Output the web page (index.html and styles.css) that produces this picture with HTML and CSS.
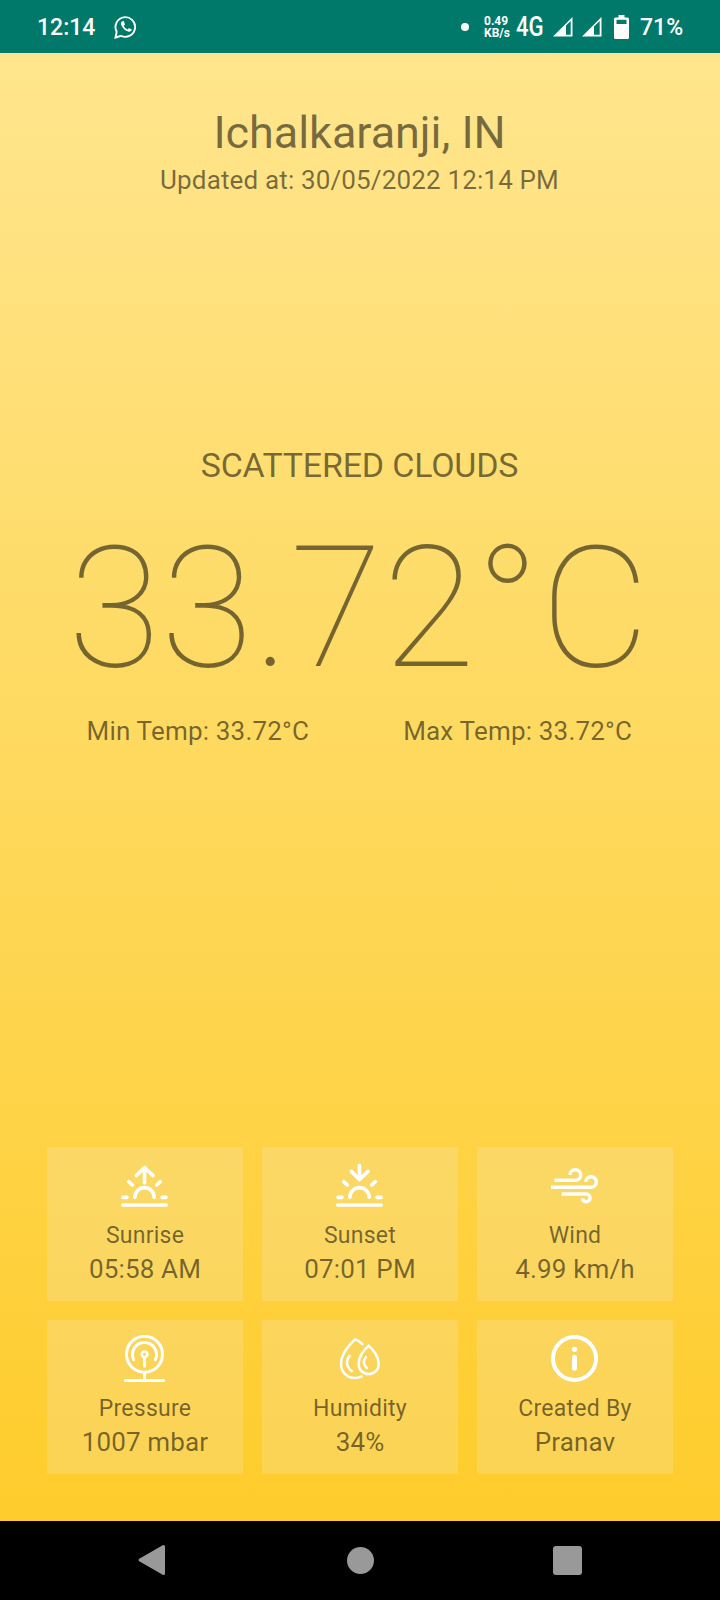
FILE: index.html
```html
<!DOCTYPE html>
<html lang="en">
<head>
<meta charset="utf-8">
<title>Weather</title>
<link rel="stylesheet" href="styles.css">
</head>
<body>
<div class="status-bar">
  <span class="clock">12:14</span>
  <svg class="whatsapp" viewBox="0 0 24 24"><path d="M1.500 22.500l1.200-5.800A9.800 9.800 0 1 1 7 20.800z" fill="none" stroke="#fff" stroke-width="1.900"/><path d="M8.300 6.200c-1 .5-1.600 1.500-1.300 2.900.8 3.600 4.200 7 7.900 7.700 1.400.3 2.700-.8 2.900-2.200l-2.800-1.500-1.400 1.500c-1.800-.8-3.100-2.100-3.900-3.800l1.300-1.400L9.700 6.100z" fill="#fff"/></svg>
  <span class="dot"></span>
  <span class="rate"><span>0.49</span><span>KB/s</span></span>
  <span class="network"><span class="network-label">4G</span></span>
  <svg class="signal" viewBox="0 0 20 20"><path d="M0 19.500L19.500 0V19.500z" fill="#fff"/><path d="M13 8.500L17.700 4V17.700H13z" fill="#00796b"/></svg>
  <svg class="signal" viewBox="0 0 20 20"><path d="M0 19.500L19.500 0V19.500z" fill="#fff"/><path d="M12 9.500L17.700 4V17.700H12z" fill="#00796b"/></svg>
  <svg class="battery" viewBox="0 0 15 24"><path d="M4.500 0h6v2.500H13.500a1.500 1.500 0 0 1 1.500 1.500V22.500a1.500 1.500 0 0 1-1.500 1.500H1.500A1.500 1.500 0 0 1 0 22.500V4a1.500 1.500 0 0 1 1.500-1.500H4.500z" fill="#fff"/><path d="M2.500 4.800h10v4.200h-10z" fill="#00796b"/></svg>
  <span class="percent">71%</span>
</div>
<main class="weather">
  <h1 class="city">Ichalkaranji, IN</h1>
  <p class="updated">Updated at: 30/05/2022 12:14 PM</p>
  <p class="condition">SCATTERED CLOUDS</p>
  <p class="temperature">33.72°C</p>
  <div class="range"><span class="min">Min Temp: 33.72°C</span><span class="max">Max Temp: 33.72°C</span></div>
  <div class="tiles">
    <section class="tile">
      <svg class="icon" viewBox="0 0 141 141" stroke-width="11"><path d="M70.500 62V17M46 41L70.500 16.500L96 41M41.500 106A29 29 0 0 1 99.500 106M6 106H18M123 106H135M23 59L34 69M118 59L107 69M5.500 129H135.500"/></svg>
      <span class="label">Sunrise</span><span class="value">05:58 AM</span>
    </section>
    <section class="tile">
      <svg class="icon" viewBox="0 0 141 141" stroke-width="11"><path d="M70.500 11V52M46 28L70.500 52.500L96 28M41.500 106A29 29 0 0 1 99.500 106M6 106H18M123 106H135M23 59L34 69M118 59L107 69M5.500 129H135.500"/></svg>
      <span class="label">Sunset</span><span class="value">07:01 PM</span>
    </section>
    <section class="tile">
      <svg class="icon wind" viewBox="0 0 141 141" stroke-width="10.500"><path d="M10 55H73A16 16 0 1 0 57 39M0 76H120A16 16 0 1 0 104 60M32 96H105A11.500 11.500 0 1 1 94 109"/></svg>
      <span class="label">Wind</span><span class="value">4.99 km/h</span>
    </section>
    <section class="tile">
      <svg class="icon" viewBox="0 0 141 141" stroke-width="9"><circle cx="70.500" cy="58" r="54"/><path d="M38 74A36 36 0 1 1 103 74M70.500 69V94M70.500 112V136M13 136.500H128"/><circle cx="70.500" cy="58" r="8.500" stroke-width="8"/></svg>
      <span class="label">Pressure</span><span class="value">1007 mbar</span>
    </section>
    <section class="tile">
      <svg class="icon drops" viewBox="0 0 141 141" stroke-width="7.500"><path d="M79 27C72 20 64 15 57 13C37 31 15 60 15 86C15 112 34 129 57 129C65 129 71 127 77 124M98 32C86 42 68 64 68 87C68 105 81 117 98 117C115 117 128 105 128 87C128 64 110 42 98 32ZM41 62C29 76 30 96 47 108M90 66C80 78 82 91 93 99"/></svg>
      <span class="label">Humidity</span><span class="value">34%</span>
    </section>
    <section class="tile">
      <svg class="icon" viewBox="0 0 141 141" stroke-width="12"><circle cx="70.500" cy="70.500" r="64.500"/><circle cx="70.500" cy="43" r="8" fill="#fff" stroke="none"/><path d="M70.500 67V100" stroke-width="15"/></svg>
      <span class="label">Created By</span><span class="value">Pranav</span>
    </section>
  </div>
</main>
<nav class="nav-bar">
  <svg class="nav-icon" viewBox="0 0 32 32"><path d="M4 16L27.500 2.500V29.500z" fill="#999" stroke="#999" stroke-width="3" stroke-linejoin="round"/></svg>
  <svg class="nav-icon" viewBox="0 0 32 32"><circle cx="16.500" cy="16.500" r="13.500" fill="#999"/></svg>
  <svg class="nav-icon" viewBox="0 0 32 32"><rect x="1" y="2" width="29" height="29" rx="3" fill="#999"/></svg>
</nav>
</body>
</html>
```
FILE: styles.css
```css
* { box-sizing: border-box; }
body {
  margin: 0;
  width: 720px;
  height: 1600px;
  display: flex;
  flex-direction: column;
  font-family: Roboto, "Liberation Sans", sans-serif;
}
h1, p { margin: 0; font-weight: 400; }
.status-bar {
  height: 53px;
  flex: none;
  display: flex;
  align-items: center;
  padding-left: 37px;
  background: #00796b;
  color: #fff;
}
.status-bar > * { flex: none; }
.clock, .percent { font-size: 23px; font-weight: 500; line-height: 28px; padding-top: 2px; }
.clock { width: 77px; }
.whatsapp { width: 24px; height: 24px; }
.dot { width: 8px; height: 8px; border-radius: 50%; background: #fff; margin-left: 323px; }
.rate {
  display: flex;
  flex-direction: column;
  width: 32px;
  margin-left: 15px;
  font-size: 12px;
  line-height: 12px;
  font-weight: 700;
}
.network { width: 28px; font-size: 27px; line-height: 34px; font-weight: 500; }
.network-label { display: inline-block; transform: scaleX(0.82); transform-origin: left center; }
.signal { width: 20px; height: 20px; margin-left: 9px; }
.battery { width: 15px; height: 24px; margin-left: 12px; }
.percent { margin-left: 11px; white-space: nowrap; }
.weather {
  flex: 1;
  display: flex;
  flex-direction: column;
  padding: 53px 47px 47px;
  background: linear-gradient(#ffe58d, #fecc2b);
  color: rgba(0, 0, 0, 0.54);
  text-align: center;
}
.city { padding-right: 1px; font-size: 45px; line-height: 54px; letter-spacing: -0.05px; }
.updated { padding-right: 1px; margin-top: 4px; font-size: 26px; line-height: 32px; letter-spacing: 0.15px; }
.condition { margin-top: 249px; padding-right: 1px; font-size: 34px; line-height: 40px; letter-spacing: -0.2px; }
.temperature { margin: 24px -19px 0 -21px; font-size: 169px; line-height: 198px; font-weight: 100; letter-spacing: 0.2px; white-space: nowrap; }
.range { display: flex; justify-content: space-between; padding: 0 41px 0 39.5px; margin-top: 8px; font-size: 26px; line-height: 32px; letter-spacing: 0.18px; }
.tiles {
  margin-top: auto;
  display: grid;
  grid-template-columns: repeat(3, 196px);
  grid-auto-rows: 154px;
  gap: 19px;
}
.tile {
  display: flex;
  flex-direction: column;
  align-items: center;
  padding: 15px 1px 0 0;
  background: rgba(238, 238, 238, 0.2);
}
.icon { width: 47px; height: 47px; fill: none; stroke: #fff; stroke-linecap: round; stroke-linejoin: round; }
.wind { stroke-linecap: butt; }
.drops { stroke-linejoin: miter; }
.label { margin-top: 13px; padding-left: 1px; font-size: 23px; line-height: 28px; letter-spacing: 0.25px; }
.value { margin-top: 4px; padding-left: 1px; font-size: 26px; line-height: 30px; letter-spacing: 0.15px; }
.nav-bar {
  height: 79px;
  flex: none;
  display: flex;
  justify-content: space-between;
  align-items: center;
  padding: 0 136px 1px;
  background: #000;
}
.nav-icon { width: 32px; height: 32px; }
```
